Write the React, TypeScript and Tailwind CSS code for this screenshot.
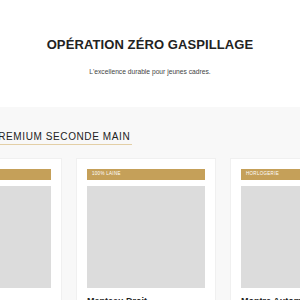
const products = [
  { tag: "Cachemire", name: "Pull Col Roulé" },
  { tag: "100% Laine", name: "Manteau Droit" },
  { tag: "Horlogerie", name: "Montre Automatique" },
];

function ProductCard({ tag, name }: { tag: string; name: string }) {
  return (
    <div className="w-[140px] shrink-0 bg-white p-[10px] border border-[#f0f0f0]">
      <div className="h-[11px] bg-[#c5a059] px-[5px] flex items-center text-[4.5px] uppercase tracking-[0.3px] text-white">
        {tag}
      </div>
      <div className="mt-[6px] h-[102px] bg-[#dcdcdc]" />
      <div className="mt-[7px] text-[9px] font-bold text-[#222] whitespace-nowrap overflow-hidden">
        {name}
      </div>
      <div className="mt-[4px] text-[8px] text-[#c5a059]">120 €</div>
    </div>
  );
}

export default function App() {
  return (
    <div className="w-[300px] h-[300px] overflow-hidden bg-white font-['Liberation_Sans',Arial,sans-serif]">
      <header className="h-[107px] flex flex-col items-center pt-[37px]">
        <h1 className="text-[13px] leading-[16px] font-bold tracking-[0.1px] text-[#222]">
          OPÉRATION ZÉRO GASPILLAGE
        </h1>
        <p className="mt-[14px] text-[6.7px] text-[#444]">
          L'excellence durable pour jeunes cadres.
        </p>
      </header>
      <section className="bg-[#f8f8f8] pt-[24px] h-[193px] overflow-hidden">
        <h2 className="ml-[-9px] w-fit text-[10px] leading-[12px] font-medium tracking-[0.6px] text-[#222] pb-[1px] pr-[2px] border-b border-[#e3cfa6]">
          PREMIUM SECONDE MAIN
        </h2>
        <div className="mt-[13px] ml-[-78px] flex gap-[14px]">
          {products.map((p) => (
            <ProductCard key={p.tag} tag={p.tag} name={p.name} />
          ))}
        </div>
      </section>
    </div>
  );
}
